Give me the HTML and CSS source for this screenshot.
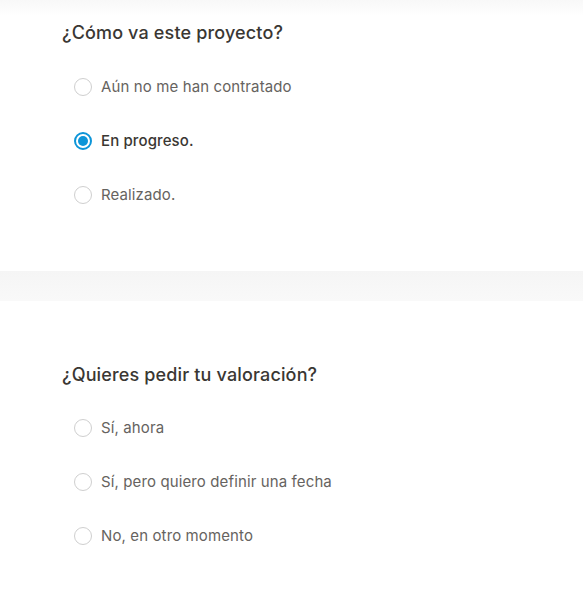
FILE: index.html
```html
<!DOCTYPE html>
<html lang="es">
<head>
<meta charset="utf-8">
<title>Proyecto</title>
<link rel="stylesheet" href="styles.css">
</head>
<body>
<div class="top-shade"></div>
<section class="block block-first">
  <h2 class="question">¿Cómo va este proyecto?</h2>
  <ul class="options">
    <li class="option"><span class="radio"></span><span class="label">Aún no me han contratado</span></li>
    <li class="option option-selected"><span class="radio radio-on"></span><span class="label">En progreso.</span></li>
    <li class="option"><span class="radio"></span><span class="label">Realizado.</span></li>
  </ul>
</section>
<div class="band"></div>
<section class="block block-second">
  <h2 class="question">¿Quieres pedir tu valoración?</h2>
  <ul class="options">
    <li class="option"><span class="radio"></span><span class="label">Sí, ahora</span></li>
    <li class="option"><span class="radio"></span><span class="label">Sí, pero quiero definir una fecha</span></li>
    <li class="option"><span class="radio"></span><span class="label">No, en otro momento</span></li>
  </ul>
</section>
</body>
</html>
```

FILE: styles.css
```css
html, body {
  margin: 0;
  padding: 0;
  background: #ffffff;
  font-family: Inter, "Noto Sans", sans-serif;
}
.top-shade {
  height: 16px;
  margin-bottom: -16px;
  background: linear-gradient(#f8f8f8, #ffffff);
}
.block {
  display: flex;
  flex-direction: column;
  padding: 21px 62px 49px;
}
.block-second {
  padding-top: 62px;
}
.question {
  margin: 0;
  height: 24px;
  line-height: 24px;
  font-size: 18px;
  font-weight: 500;
  color: #3a3733;
  letter-spacing: 0.15px;
}
.options {
  list-style: none;
  margin: 15px 0 0;
  padding: 0 0 0 12px;
  display: flex;
  flex-direction: column;
}
.block-second .options {
  margin-top: 14px;
}
.option {
  height: 54px;
  display: flex;
  align-items: center;
  gap: 9px;
}
.radio {
  box-sizing: border-box;
  width: 18px;
  height: 18px;
  border-radius: 50%;
  border: 1px solid #cfcfcf;
  flex: none;
  position: relative;
}
.radio-on {
  border: 2px solid #0d95d8;
}
.radio-on::after {
  content: "";
  position: absolute;
  left: 2px;
  top: 2px;
  width: 10px;
  height: 10px;
  border-radius: 50%;
  background: #0d95d8;
}
.label {
  font-size: 15px;
  color: #666360;
  line-height: 20px;
  letter-spacing: 0.12px;
}
.option-selected .label {
  color: #3a3733;
  font-weight: 500;
}
.band {
  height: 30px;
  background: linear-gradient(#f5f5f5, #f9f9f9);
}
```
